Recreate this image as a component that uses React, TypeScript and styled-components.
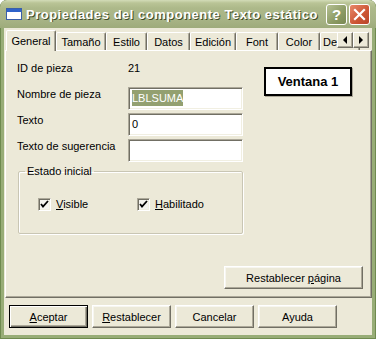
import React from 'react';
import styled, { createGlobalStyle, css } from 'styled-components';

const GlobalStyle = createGlobalStyle`
  html, body {
    margin: 0;
    padding: 0;
    background: #ffffff;
  }
  body {
    font-family: 'Liberation Sans', Arial, sans-serif;
    font-size: 11px;
    color: #000;
  }
`;

const tabs = [
  { label: 'General', w: 50, active: true },
  { label: 'Tamaño', w: 50 },
  { label: 'Estilo', w: 41 },
  { label: 'Datos', w: 43 },
  { label: 'Edición', w: 46 },
  { label: 'Font', w: 42 },
  { label: 'Color', w: 42 },
  { label: 'De', w: 40, clipped: true },
];

const fields = [
  { label: 'Nombre de pieza', value: 'LBLSUMA', selected: true },
  { label: 'Texto', value: '0' },
  { label: 'Texto de sugerencia', value: '' },
];

export default function App() {
  return (
    <>
      <GlobalStyle />
      <Window>
        <TitleBar>
          <WinIcon width="16" height="12" viewBox="0 0 16 12">
            <rect x="0.5" y="0.5" width="15" height="11" fill="#ffffff" stroke="#3a5fa8" />
            <rect x="1" y="1" width="14" height="3" fill="#2f62c9" />
          </WinIcon>
          <Title>Propiedades del componente Texto estático</Title>
          <CaptionButton $kind="help">?</CaptionButton>
          <CaptionButton $kind="close">
            <svg width="13" height="13" viewBox="0 0 13 13">
              <path d="M2 2 L11 11 M11 2 L2 11" stroke="#ffffff" strokeWidth="2.2" strokeLinecap="square" />
            </svg>
          </CaptionButton>
        </TitleBar>

        <Body>
          <TabStrip>
            {tabs.map((t) => (
              <Tab key={t.label} $w={t.w} $active={t.active} $clipped={t.clipped}>
                {t.label}
              </Tab>
            ))}
            <Scroller>
              <ScrollButton>
                <svg width="8" height="8" viewBox="0 0 8 8">
                  <polygon points="2,4 6,0 6,8" fill="#000" />
                </svg>
              </ScrollButton>
              <ScrollButton>
                <svg width="8" height="8" viewBox="0 0 8 8">
                  <polygon points="2,0 6,4 2,8" fill="#000" />
                </svg>
              </ScrollButton>
            </Scroller>
          </TabStrip>

          <Panel>
            <TopSection>
              <LeftCol>
                <FormGrid>
                  <Label>ID de pieza</Label>
                  <Label>21</Label>
                  {fields.map((f) => (
                    <React.Fragment key={f.label}>
                      <Label>{f.label}</Label>
                      <Input>
                        {f.selected ? <Selection>{f.value}</Selection> : f.value}
                      </Input>
                    </React.Fragment>
                  ))}
                </FormGrid>

                <GroupBox>
                  <Legend>Estado inicial</Legend>
                  <CheckRow>
                    <CheckItem>
                      <CheckBox>
                        <svg width="9" height="9" viewBox="0 0 9 9">
                          <path d="M1 4 L3 6.5 L8 1" stroke="#000" strokeWidth="1.8" fill="none" />
                        </svg>
                      </CheckBox>
                      <span><u>V</u>isible</span>
                    </CheckItem>
                    <CheckItem>
                      <CheckBox>
                        <svg width="9" height="9" viewBox="0 0 9 9">
                          <path d="M1 4 L3 6.5 L8 1" stroke="#000" strokeWidth="1.8" fill="none" />
                        </svg>
                      </CheckBox>
                      <span><u>H</u>abilitado</span>
                    </CheckItem>
                  </CheckRow>
                </GroupBox>
              </LeftCol>

              <WindowTag>Ventana 1</WindowTag>
            </TopSection>

            <ResetPageButton>
              Restablecer <u>p</u>ágina
            </ResetPageButton>
          </Panel>

          <Footer>
            <Button $default>
              <u>A</u>ceptar
            </Button>
            <Button>
              <u>R</u>establecer
            </Button>
            <Button>Cancelar</Button>
            <Button>Ayuda</Button>
          </Footer>
        </Body>
      </Window>
    </>
  );
}

const Window = styled.div`
  width: 376px;
  height: 339px;
  box-sizing: border-box;
  display: flex;
  flex-direction: column;
  background: #98ad77;
  border-radius: 7px 7px 0 0;
  box-shadow: inset 1px 0 #6f8a4f, inset -1px 0 #6f8a4f, inset 0 -1px #6f8a4f;
  overflow: hidden;
`;

const TitleBar = styled.div`
  height: 28px;
  flex: none;
  display: flex;
  align-items: center;
  padding: 0 6px 0 6px;
  background: linear-gradient(
    #d3dcb8 0px,
    #b9c496 3px,
    #adb98a 8px,
    #a7b385 20px,
    #9eab7b 28px
  );
  border-radius: 7px 7px 0 0;
`;

const WinIcon = styled.svg`
  flex: none;
  margin-right: 4px;
`;

const Title = styled.div`
  flex: 1;
  font-family: 'Liberation Sans', Arial, sans-serif;
  font-weight: 700;
  font-size: 13px;
  letter-spacing: 0.5px;
  color: #ffffff;
  text-shadow: 1px 1px #3f4a26;
  white-space: nowrap;
  overflow: hidden;
`;

const CaptionButton = styled.div<{ $kind: 'help' | 'close' }>`
  width: 21px;
  height: 21px;
  box-sizing: border-box;
  margin-left: 2px;
  border: 1px solid #ffffff;
  border-radius: 3px;
  display: flex;
  align-items: center;
  justify-content: center;
  color: #ffffff;
  font-family: 'Liberation Sans', Arial, sans-serif;
  font-weight: 700;
  font-size: 15px;
  ${(p) =>
    p.$kind === 'help'
      ? css`
          background: linear-gradient(135deg, #b6c194, #8b9a63 60%, #7a8953);
        `
      : css`
          background: linear-gradient(135deg, #e8896a, #cc5534 60%, #b8452a);
        `}
`;

const Body = styled.div`
  flex: 1;
  margin: 0 4px 4px;
  padding: 2px 0 0 1px;
  background: #ece9d8;
  display: flex;
  flex-direction: column;
`;

const TabStrip = styled.div`
  position: relative;
  height: 21px;
  display: flex;
  align-items: flex-end;
  padding-left: 1px;
  overflow: hidden;
  z-index: 1;
  margin-bottom: -1px;
`;

const Tab = styled.div<{ $w: number; $active?: boolean; $clipped?: boolean }>`
  flex: none;
  width: ${(p) => p.$w}px;
  height: 18px;
  margin-bottom: 1px;
  box-sizing: border-box;
  border: 1px solid;
  border-bottom: none;
  border-color: #ffffff #716f64 transparent #ffffff;
  box-shadow: inset -1px 0 #aca899;
  border-radius: 2px 2px 0 0;
  background: #ece9d8;
  display: flex;
  align-items: center;
  justify-content: ${(p) => (p.$clipped ? 'flex-start' : 'center')};
  padding-left: ${(p) => (p.$clipped ? '2px' : '0')};
  white-space: nowrap;
  overflow: hidden;
  ${(p) =>
    p.$active &&
    css`
      height: 21px;
      margin-bottom: 0;
      padding-bottom: 1px;
    `}
`;

const Scroller = styled.div`
  position: absolute;
  right: 3px;
  top: 2px;
  display: flex;
`;

const ScrollButton = styled.div`
  width: 16px;
  height: 16px;
  box-sizing: border-box;
  background: #ece9d8;
  border: 1px solid;
  border-color: #ffffff #716f64 #716f64 #ffffff;
  box-shadow: inset -1px -1px #aca899;
  display: flex;
  align-items: center;
  justify-content: center;
`;

const Panel = styled.div`
  height: 248px;
  width: 367px;
  box-sizing: border-box;
  border: 1px solid;
  border-color: #ffffff #716f64 #716f64 #ffffff;
  box-shadow: inset -1px -1px #aca899;
  display: flex;
  flex-direction: column;
`;

const TopSection = styled.div`
  display: flex;
  align-items: flex-start;
  padding: 10px 0 0 11px;
`;

const LeftCol = styled.div`
  width: 226px;
  display: flex;
  flex-direction: column;
`;

const FormGrid = styled.div`
  display: grid;
  grid-template-columns: 111px 115px;
  grid-auto-rows: 23px;
  row-gap: 3px;
`;

const Label = styled.div`
  padding-top: 1px;
  line-height: 13px;
`;

const Input = styled.div`
  box-sizing: border-box;
  height: 23px;
  background: #ffffff;
  border: 1px solid;
  border-color: #aca899 #ffffff #ffffff #aca899;
  box-shadow: inset 1px 1px #716f64, inset -1px -1px #f1efe2;
  padding: 4px 2px 0 3px;
  line-height: 13px;
`;

const Selection = styled.span`
  background: #93a070;
  color: #ffffff;
  padding: 2px 0 2px;
`;

const GroupBox = styled.fieldset`
  margin: 3px 0 0 1px;
  width: 225px;
  height: 69px;
  box-sizing: border-box;
  border: 1px solid #c9c6b4;
  border-radius: 2px;
  box-shadow: 1px 1px #ffffff, inset 1px 1px #ffffff;
  padding: 0 6px;
  min-width: 0;
`;

const Legend = styled.legend`
  padding: 0 2px;
  line-height: 13px;
`;

const CheckRow = styled.div`
  display: flex;
  padding: 20px 0 0 13px;
`;

const CheckItem = styled.label`
  width: 100px;
  display: flex;
  align-items: center;
  gap: 5px;
  line-height: 13px;
`;

const CheckBox = styled.span`
  width: 13px;
  height: 13px;
  box-sizing: border-box;
  flex: none;
  background: #f4f3ee;
  border: 1px solid;
  border-color: #aca899 #ffffff #ffffff #aca899;
  box-shadow: inset 1px 1px #716f64, inset -1px -1px #f1efe2;
  display: flex;
  align-items: center;
  justify-content: center;
`;

const WindowTag = styled.div`
  margin: 6px 0 0 21px;
  width: 88px;
  height: 29px;
  box-sizing: border-box;
  border: 2px solid #000000;
  box-shadow: 1px 1px #aca899;
  background: #ffffff;
  display: flex;
  align-items: center;
  justify-content: center;
  font-weight: 700;
  font-size: 13px;
`;

const buttonBase = css`
  box-sizing: border-box;
  height: 23px;
  padding: 0;
  font-family: 'Liberation Sans', Arial, sans-serif;
  font-size: 11px;
  color: #000000;
  background: #ece9d8;
  border: 1px solid;
  border-color: #ffffff #716f64 #716f64 #ffffff;
  box-shadow: inset -1px -1px #aca899, inset 1px 1px #f7f6f0;
`;

const ResetPageButton = styled.button`
  ${buttonBase};
  width: 139px;
  margin: auto 8px 8px auto;
`;

const Footer = styled.div`
  display: flex;
  gap: 4px;
  padding: 7px 0 0 4px;
`;

const Button = styled.button<{ $default?: boolean }>`
  ${buttonBase};
  width: 79px;
  ${(p) =>
    p.$default &&
    css`
      border-color: #000000;
      box-shadow: inset 1px 1px #ffffff, inset -1px -1px #716f64,
        inset -2px -2px #aca899;
    `}
`;
